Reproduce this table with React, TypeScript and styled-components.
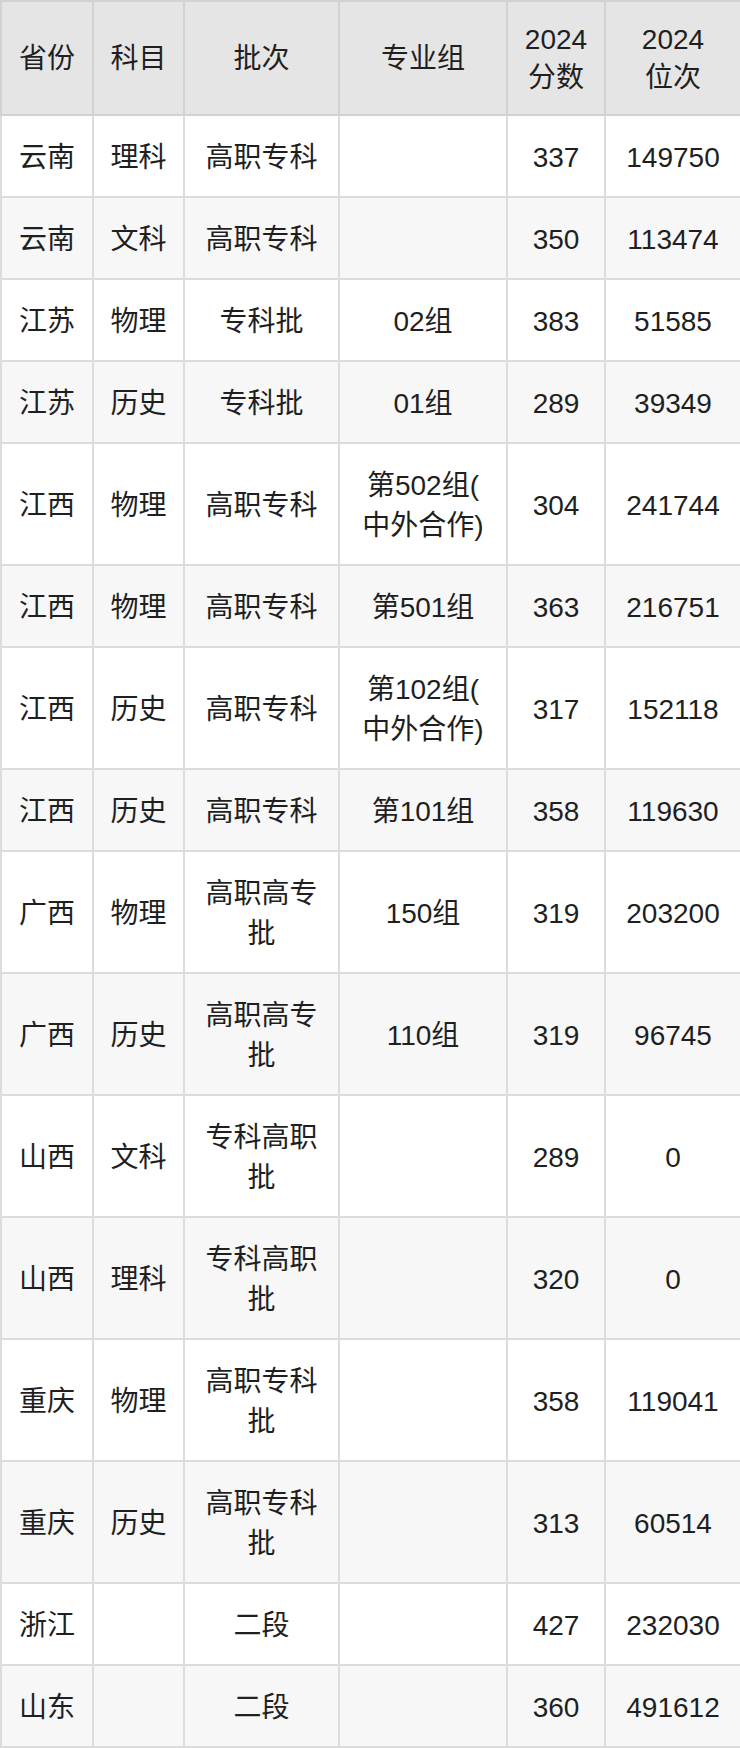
import React from 'react'
import styled, { createGlobalStyle } from 'styled-components'

type Row = {
  province: string
  subject: string
  batch: string
  group: string[]
  score: string
  rank: string
}

const columns = [
  { key: 'province', width: 92, title: ['省份'] },
  { key: 'subject', width: 91, title: ['科目'] },
  { key: 'batch', width: 155, title: ['批次'] },
  { key: 'group', width: 168, title: ['专业组'] },
  { key: 'score', width: 98, title: ['2024', '分数'] },
  { key: 'rank', width: 136, title: ['2024', '位次'] }
]

const rows: Row[] = [
  { province: '云南', subject: '理科', batch: '高职专科', group: [], score: '337', rank: '149750' },
  { province: '云南', subject: '文科', batch: '高职专科', group: [], score: '350', rank: '113474' },
  { province: '江苏', subject: '物理', batch: '专科批', group: ['02组'], score: '383', rank: '51585' },
  { province: '江苏', subject: '历史', batch: '专科批', group: ['01组'], score: '289', rank: '39349' },
  { province: '江西', subject: '物理', batch: '高职专科', group: ['第502组(', '中外合作)'], score: '304', rank: '241744' },
  { province: '江西', subject: '物理', batch: '高职专科', group: ['第501组'], score: '363', rank: '216751' },
  { province: '江西', subject: '历史', batch: '高职专科', group: ['第102组(', '中外合作)'], score: '317', rank: '152118' },
  { province: '江西', subject: '历史', batch: '高职专科', group: ['第101组'], score: '358', rank: '119630' },
  { province: '广西', subject: '物理', batch: '高职高专批', group: ['150组'], score: '319', rank: '203200' },
  { province: '广西', subject: '历史', batch: '高职高专批', group: ['110组'], score: '319', rank: '96745' },
  { province: '山西', subject: '文科', batch: '专科高职批', group: [], score: '289', rank: '0' },
  { province: '山西', subject: '理科', batch: '专科高职批', group: [], score: '320', rank: '0' },
  { province: '重庆', subject: '物理', batch: '高职专科批', group: [], score: '358', rank: '119041' },
  { province: '重庆', subject: '历史', batch: '高职专科批', group: [], score: '313', rank: '60514' },
  { province: '浙江', subject: '', batch: '二段', group: [], score: '427', rank: '232030' },
  { province: '山东', subject: '', batch: '二段', group: [], score: '360', rank: '491612' }
]

const GlobalStyle = createGlobalStyle`
  html, body {
    margin: 0;
    padding: 0;
    background: #fff;
  }
`

const renderLines = (lines: string[]) =>
  lines.map((line, i) => (
    <React.Fragment key={i}>
      {i > 0 && <br />}
      {line}
    </React.Fragment>
  ))

const App = () => {
  const renderHead = () => {
    return (
      <thead>
        <tr>
          {columns.map((col) => (
            <StyledHeadCell key={col.key}>{renderLines(col.title)}</StyledHeadCell>
          ))}
        </tr>
      </thead>
    )
  }

  const renderBody = () => {
    return (
      <tbody>
        {rows.map((row, i) => (
          <StyledRow key={i} $striped={i % 2 === 1}>
            <StyledCell>{row.province}</StyledCell>
            <StyledCell>{row.subject}</StyledCell>
            <StyledCell>{row.batch}</StyledCell>
            <StyledCell>{renderLines(row.group)}</StyledCell>
            <StyledCell>{row.score}</StyledCell>
            <StyledCell>{row.rank}</StyledCell>
          </StyledRow>
        ))}
      </tbody>
    )
  }

  return (
    <>
      <GlobalStyle />
      <StyledTable>
        <colgroup>
          {columns.map((col) => (
            <col key={col.key} style={{ width: col.width }} />
          ))}
        </colgroup>
        {renderHead()}
        {renderBody()}
      </StyledTable>
    </>
  )
}

export default App

const StyledTable = styled.table`
  width: 740px;
  table-layout: fixed;
  border-collapse: collapse;
  font-family: 'Liberation Sans', 'Noto Sans CJK SC', sans-serif;
  font-size: 28px;
  color: #1f1f1f;
  border: 2px solid #dcdcdc;
`

const StyledHeadCell = styled.th`
  background: #e5e5e5;
  font-weight: normal;
  line-height: 38px;
  padding: 19px 10px 17px;
  text-align: center;
  vertical-align: middle;
  border: 2px solid #d2d2d2;
`

const StyledRow = styled.tr<{ $striped: boolean }>`
  background: ${({ $striped }) => ($striped ? '#f7f7f7' : '#fff')};
`

const StyledCell = styled.td`
  line-height: 40px;
  padding: 22px 10px 18px;
  text-align: center;
  vertical-align: middle;
  border: 2px solid #dcdcdc;
  word-break: break-all;
`
